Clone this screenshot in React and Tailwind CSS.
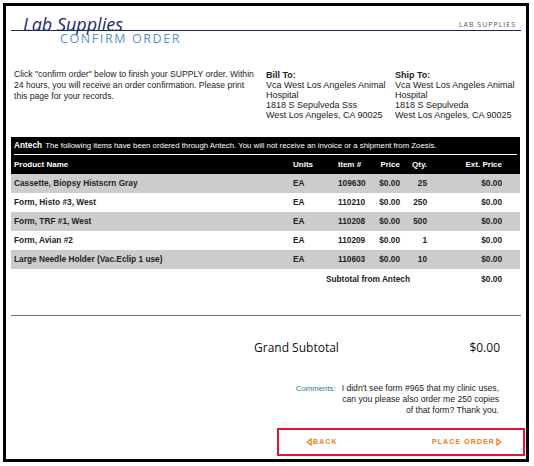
import React from 'react';

const rows = [
  { name: 'Cassette, Biopsy Histscrn Gray', units: 'EA', item: '109630', price: '$0.00', qty: '25', ext: '$0.00' },
  { name: 'Form, Histo #3, West', units: 'EA', item: '110210', price: '$0.00', qty: '250', ext: '$0.00' },
  { name: 'Form, TRF #1, West', units: 'EA', item: '110208', price: '$0.00', qty: '500', ext: '$0.00' },
  { name: 'Form, Avian #2', units: 'EA', item: '110209', price: '$0.00', qty: '1', ext: '$0.00' },
  { name: 'Large Needle Holder (Vac.Eclip 1 use)', units: 'EA', item: '110603', price: '$0.00', qty: '10', ext: '$0.00' },
];

const grid = 'grid grid-cols-[282px_45px_34px_28px_27px_75px] items-center';

function Arrow({ dir }) {
  return (
    <svg width="6" height="8" viewBox="0 0 6 8" className="shrink-0">
      {dir === 'left' ? (
        <path d="M5 1 L1 4 L5 7 Z" fill="none" stroke="#f47c20" strokeWidth="1.3" />
      ) : (
        <path d="M1 1 L5 4 L1 7 Z" fill="none" stroke="#f47c20" strokeWidth="1.3" />
      )}
    </svg>
  );
}

function App() {
  return (
    <div className="bg-white w-[534px] h-[466px] pt-[3px] pl-[3px]" style={{ fontFamily: '"Liberation Sans", Arial, sans-serif' }}>
      <div className="w-[526px] h-[459px] border-[3px] border-black px-[5px]">
        {/* header */}
        <div className="h-[25px] border-b border-[#1b2a5e] flex items-end justify-between">
          <div
            className="ml-[12px] mb-[-5px] text-[18px] leading-[22px] italic text-[#1b2a6b]"
            style={{ fontFamily: '"Open Sans", sans-serif' }}
          >
            Lab Supplies
          </div>
          <div
            className="mr-[5px] mb-[1px] text-[7px] leading-[8px] tracking-[1px] text-[#555]"
            style={{ fontFamily: '"Open Sans", sans-serif' }}
          >
            LAB SUPPLIES
          </div>
        </div>
        <div
          className="ml-[49px] mt-[2px] text-[12.5px] leading-[12px] font-medium tracking-[1.6px] text-[#5b8fd0]"
          style={{ fontFamily: '"Open Sans", sans-serif' }}
        >
          CONFIRM ORDER
        </div>

        {/* intro + addresses */}
        <div className="mt-[24px] flex text-[9px] text-[#222]">
          <p className="w-[247px] pl-[3px] leading-[11px] text-[8.6px]">
            Click "confirm order" below to finish your SUPPLY order. Within 24 hours, you will receive an order confirmation. Please print this page for your records.
          </p>
          <div className="ml-[8px] w-[129px] leading-[10px] pt-px">
            <div className="font-bold">Bill To:</div>
            <div>Vca West Los Angeles Animal Hospital</div>
            <div>1818 S Sepulveda Sss</div>
            <div>West Los Angeles, CA 90025</div>
          </div>
          <div className="w-[125px] leading-[10px] pt-px">
            <div className="font-bold">Ship To:</div>
            <div>Vca West Los Angeles Animal Hospital</div>
            <div>1818 S Sepulveda</div>
            <div>West Los Angeles, CA 90025</div>
          </div>
        </div>

        {/* order table */}
        <div className="mt-[17px] w-[509px]">
          <div className="bg-black text-white">
            <div className="h-[17px] flex items-center pl-[3px] text-[7.8px]">
              <span className="font-bold text-[8.3px] mr-[3px]">Antech</span>
              The following items have been ordered through Antech. You will not receive an invoice or a shipment from Zoesis.
            </div>
            <div className="mx-[3px] h-px bg-white" />
            <div className={`${grid} h-[19px] text-[8px] font-bold`}>
              <div className="pl-[3px]">Product Name</div>
              <div>Units</div>
              <div>Item #</div>
              <div className="text-right">Price</div>
              <div className="text-right">Qty.</div>
              <div className="text-right">Ext. Price</div>
            </div>
          </div>
          {rows.map((r, i) => (
            <div
              key={r.item}
              className={`${grid} h-[19px] text-[8.3px] font-bold text-[#222] ${i % 2 === 0 ? 'bg-[#cccccc]' : 'bg-white'}`}
            >
              <div className="pl-[3px]">{r.name}</div>
              <div>{r.units}</div>
              <div>{r.item}</div>
              <div className="text-right">{r.price}</div>
              <div className="text-right">{r.qty}</div>
              <div className="text-right">{r.ext}</div>
            </div>
          ))}
          <div className={`${grid} h-[20px] text-[8.3px] font-bold text-[#222]`}>
            <div />
            <div className="col-span-4 text-right pr-[17px]">Subtotal from Antech</div>
            <div className="text-right">$0.00</div>
          </div>
        </div>

        <div className="mt-[26px] h-px bg-[#777] w-[510px]" />

        {/* grand subtotal */}
        <div className="mt-[25px] flex text-[12px] leading-[14px] font-medium text-[#111]" style={{ fontFamily: '"Open Sans", sans-serif' }}>
          <div className="ml-[243px]">Grand Subtotal</div>
          <div className="ml-auto mr-[21px]">$0.00</div>
        </div>

        {/* comments */}
        <div className="mt-[28px] flex justify-end mr-[22px]">
          <div className="text-[7.8px] leading-[11px] text-[#2a7a9a] mr-[6px]">Comments:</div>
          <div className="text-[8.6px] leading-[11px] text-right text-[#222]">
            I didn't see form #965 that my clinic uses,
            <br />
            can you please also order me 250 copies
            <br />
            of that form? Thank you.
          </div>
        </div>

        {/* actions */}
        <div className="mt-[12px] ml-[266px] w-[248px] h-[28px] border-2 border-[#e8102e] flex items-center justify-between pl-[27px] pr-[21px] text-[7px] font-bold tracking-[1.1px] text-[#f47c20]">
          <div className="flex items-center gap-[1px]">
            <Arrow dir="left" />
            <span>BACK</span>
          </div>
          <div className="flex items-center gap-[1px]">
            <span>PLACE ORDER</span>
            <Arrow dir="right" />
          </div>
        </div>
      </div>
    </div>
  );
}

export default App;
